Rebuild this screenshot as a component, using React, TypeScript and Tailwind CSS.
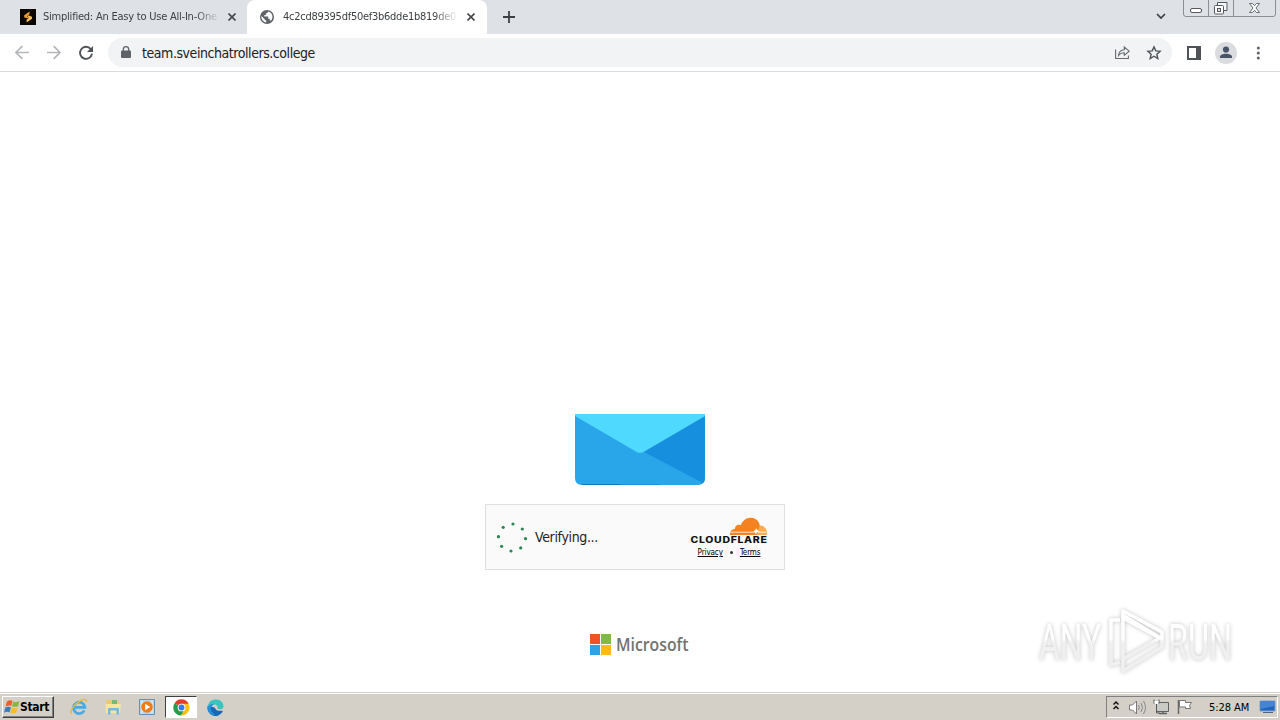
import type { ReactNode } from 'react'
import { clsx } from 'clsx'

function CloseIcon() {
  return (
    <svg width="8" height="8" viewBox="0 0 8 8" className="shrink-0">
      <path d="M0.5 0.5 L7.5 7.5 M7.5 0.5 L0.5 7.5" stroke="#45484c" strokeWidth="1.6" />
    </svg>
  )
}

function SimplifiedIcon() {
  return (
    <svg width="16" height="16" viewBox="0 0 16 16" className="shrink-0">
      <path d="M0 0h16v16H0z" fill="#090604" />
      <path d="M4.200 8.500V6.300l5.300-3.800v2.700L7 7.200l1.500.8v1.500z" fill="#e99a35" />
      <path d="m8 6.300 4 1.400v2l-5.400 3.800v-2.700l2.600-2-1.200-.6z" fill="#f9c05c" />
    </svg>
  )
}

function GlobeIcon() {
  return (
    <svg width="14" height="14" viewBox="0 0 14 14" className="shrink-0">
      <circle cx="7" cy="7" r="7" fill="#5f6368" />
      <path d="M8 1.5c-.3 1.4-.8 1.9-2.1 1.9v1.5H4.4v1.6h3.8v2.3h1.6v1.6h1.3a5.7 5.7 0 0 0 1.4-3.7A5.7 5.7 0 0 0 8 1.5z" fill="#fff" />
      <path d="M1.4 6 4.8 9.3v1h1.4v2.3A5.7 5.7 0 0 1 1.4 6z" fill="#fff" />
    </svg>
  )
}

function TabStrip() {
  return (
    <div className="flex h-[34px] bg-[#dee1e6] text-[11px] text-[#3c4043]">
      <div className="flex h-[34px] w-[247px] items-center pl-5 pr-[11px]">
        <SimplifiedIcon />
        <div className="ml-[7px] w-[177px] overflow-hidden whitespace-nowrap tracking-[-0.22px] mask-r-from-86% mask-r-to-100%">
          Simplified: An Easy to Use All-In-One
        </div>
        <span className="ml-auto flex"><CloseIcon /></span>
      </div>
      <div className="flex h-[34px] w-[240px] items-center rounded-t-lg bg-white pl-[13px] pr-3">
        <GlobeIcon />
        <div className="ml-[9px] w-[175px] overflow-hidden whitespace-nowrap tracking-[-0.26px] mask-r-from-86% mask-r-to-100%">
          4c2cd89395df50ef3b6dde1b819de0
        </div>
        <span className="ml-auto flex"><CloseIcon /></span>
      </div>
      <svg width="12" height="12" viewBox="0 0 12 12" className="ml-4 mt-[11px]">
        <path d="M6 0v12M0 6h12" stroke="#3c4043" strokeWidth="1.8" />
      </svg>
      <div className="ml-auto flex">
        <svg width="10" height="7" viewBox="0 0 10 7" className="mr-[17px] mt-[13px]">
          <path d="m1 1 4 4 4-4" fill="none" stroke="#3c4043" strokeWidth="1.7" />
        </svg>
        <svg width="97" height="18" viewBox="0 0 97 18">
          <path d="M.5 0v14q0 2.500 2.500 2.500h87q2.500 0 2.500-2.500V0M25.500 0v16.500M50.500 0v16.500" fill="none" stroke="#8b8e93" />
          <rect x="7.5" y="8.5" width="11" height="4" rx="1.5" fill="#fff" stroke="#55585d" />
          <path d="M34.500 5V2.500h9.500v8h-3" fill="#f5f6f7" stroke="#55585d" />
          <rect x="31.5" y="5.5" width="9" height="8.5" rx="1" fill="#fff" stroke="#55585d" />
          <rect x="34.5" y="8.5" width="3" height="3" fill="#dee1e6" stroke="#55585d" />
          <path d="M66.500 3.500h3l2 2.200 2-2.200h3l-3.500 4.500 3.500 4.500h-3l-2-2.200-2 2.200h-3L70 8z" fill="#fff" stroke="#676a6f" />
        </svg>
      </div>
    </div>
  )
}

function Toolbar() {
  return (
    <div className="flex h-[38px] items-center border-b border-[#d9dbdd] bg-white pl-[15px]">
      <svg width="80" height="16" viewBox="0 0 80 16" fill="none">
        <path d="M14 7.500H1M7.300 1.200 1 7.500l6.300 6.300" stroke="#b4b6b9" strokeWidth="1.7" />
        <path d="M32 7.500h13M38.700 1.200 45 7.500l-6.300 6.300" stroke="#b4b6b9" strokeWidth="1.7" />
        <path d="M75.700 4A6 6 0 1 0 77 8.700" stroke="#4f5358" strokeWidth="1.9" />
        <path d="M78 1v6h-6z" fill="#4f5358" />
      </svg>
      <div className="ml-[13px] flex h-[29px] w-[1064px] items-center rounded-full bg-[#f1f3f4] pl-[13px] pr-[10px]">
        <svg width="10" height="13" viewBox="0 0 10 13">
          <rect y="4.5" width="10" height="7.5" rx="1" fill="#5f6368" />
          <path d="M2.300 5V3.400a2.700 2.700 0 0 1 5.400 0V5" fill="none" stroke="#5f6368" strokeWidth="1.3" />
        </svg>
        <span className="ml-[11px] text-[14px] leading-none tracking-[-0.44px] text-[#202124]">
          team.sveinchatrollers.college
        </span>
        <svg width="15" height="15" viewBox="0 0 15 15" className="ml-auto" fill="none" stroke="#66696e" strokeWidth="1.1">
          <path d="M.6 4.500v9h12.800v-3" />
          <path d="M3.500 10.500c.3-3.800 2.400-5.600 5.800-5.800V2l4.900 4.200-4.900 4.200V7.800c-2.600 0-4.400.8-5.800 2.700z" />
        </svg>
        <svg width="16" height="16" viewBox="0 0 24 24" className="ml-[16px]">
          <path d="m12 2.800 2.700 6 6.500.6-4.900 4.400 1.400 6.500-5.700-3.400-5.700 3.400 1.400-6.500-4.900-4.400 6.500-.6z" fill="none" stroke="#505459" strokeWidth="2.1" />
        </svg>
      </div>
      <svg width="14" height="14" viewBox="0 0 14 14" className="ml-[15px]">
        <path d="M1 1h12v12H1z" fill="none" stroke="#4f5358" strokeWidth="2" />
        <path d="M9 0h5v14H9z" fill="#4f5358" />
      </svg>
      <svg width="22" height="22" viewBox="0 0 22 22" className="ml-[14px]">
        <circle cx="11" cy="11" r="11" fill="#dadce0" />
        <circle cx="11" cy="7.5" r="3.1" fill="#495468" />
        <path d="M5 16v-1.200c0-4 12-4 12 0V16z" fill="#495468" />
      </svg>
      <svg width="4" height="14" viewBox="0 0 4 14" className="ml-[19px]" fill="#5f6368">
        <circle cx="2.3" cy="2" r="1.5" />
        <circle cx="2.3" cy="7" r="1.5" />
        <circle cx="2.3" cy="12" r="1.5" />
      </svg>
    </div>
  )
}

function Envelope() {
  return (
    <svg width="130" height="71" viewBox="0 0 130 71">
      <path d="M0 0h130v64q0 7-7 7H7q-7 0-7-7z" fill="#29a5ea" />
      <path d="M130 2v62q0 3-2 5L69 38z" fill="#168fdf" />
      <path d="M0 0h130v2L70 37q-5 4-10 0L0 2z" fill="#50d9ff" />
      <path d="M7 70.500h38" stroke="#1276b8" />
      <path d="M45 70.500h40" stroke="#168fdf" />
    </svg>
  )
}

const spinnerDots = [
  [16, 2], [25.3, 7], [28.5, 16.7], [23.7, 25.9], [14, 29], [4.6, 24.3], [1.5, 14.7], [6.2, 5.3],
]

function CloudflareLogo() {
  return (
    <svg width="78" height="28" viewBox="0 0 78 28" overflow="visible">
      <path d="M40 19c-.3-4 2-6 5-6-.2-3.500 3-5.200 5.800-3.800C53 4 57 1.200 61.500 1.700c5 .5 8 3.800 8.500 9L67.500 19z" fill="#f58220" />
      <path d="M66.500 19 70 9.500c4.500-.2 7.300 4 7 9.500z" fill="#faad4d" />
      <path d="M40 16.200h24.500c1.700 0 2.500-1 3.400-2.500M68 16.200h8" fill="none" stroke="#fff" strokeWidth=".8" />
      <path d="m66 12 1.300 2.200L70 15.500l-3 .8-1.300 2.200-.8-2.500-2.200-.7 2.500-1z" fill="#fff" />
      <g transform="translate(0.5 27.4) scale(1.22 1)">
        <text fontFamily="Inter, Liberation Sans, sans-serif" fontSize="8.6" fontWeight="800" textLength="62.6" lengthAdjust="spacing" fill="#111">
          CLOUDFLARE
        </text>
      </g>
    </svg>
  )
}

function Challenge() {
  return (
    <div className="mr-[10px] mt-[19px] flex h-[66px] w-[300px] items-center border border-[#e0e0e0] bg-[#fafafa] pl-[11px] pr-4">
      <svg width="31" height="31" viewBox="0 0 31 31">
        {spinnerDots.map(([cx, cy]) => (
          <circle key={cx} cx={cx} cy={cy} r="1.6" fill="#2c8752" />
        ))}
      </svg>
      <span className="ml-[7px] text-[14px] tracking-[-0.35px] text-[#232323]">Verifying...</span>
      <div className="ml-auto flex flex-col items-center">
        <CloudflareLogo />
        <div className="mt-[3px] flex items-center text-[8px] leading-[11px] tracking-[-0.1px] text-black">
          <span className="underline">Privacy</span>
          <span className="mx-[7px] size-[3px] rounded-full bg-[#333]" />
          <span className="underline">Terms</span>
        </div>
      </div>
    </div>
  )
}

function MicrosoftLogo() {
  return (
    <svg width="100" height="22" viewBox="0 0 100 22" className="mt-[64px]" overflow="visible">
      <path d="M0 0h10v10H0z" fill="#ef5429" />
      <path d="M11 0h10v10H11z" fill="#80bb45" />
      <path d="M0 11h10v10H0z" fill="#2ba3e8" />
      <path d="M11 11h10v10H11z" fill="#ffb91b" />
      <text x="26" y="17" fontFamily="Open Sans, sans-serif" fontSize="17.5" fontWeight="600" textLength="72.5" lengthAdjust="spacingAndGlyphs" fill="#737373">
        Microsoft
      </text>
    </svg>
  )
}

function Watermark() {
  return (
    <svg width="204" height="72" viewBox="0 0 204 72" overflow="visible" className="absolute right-[42px] bottom-[16px] drop-shadow-[0_0_2px_rgba(0,0,0,0.24)]">
      <defs>
        <linearGradient id="fade" x1="0" y1="0" x2="0" y2="72" gradientUnits="userSpaceOnUse">
          <stop offset=".48" stopColor="#fff" />
          <stop offset=".54" stopColor="#f0f0f0" />
        </linearGradient>
      </defs>
      <g fontFamily="Roboto, Liberation Sans, sans-serif" fontSize="50" fill="url(#fade)">
        <text x="5" y="56" textLength="62" lengthAdjust="spacingAndGlyphs">ANY</text>
        <text x="134" y="56" textLength="64" lengthAdjust="spacingAndGlyphs">RUN</text>
      </g>
      <g fill="none" stroke="url(#fade)" strokeWidth="3.5" strokeLinejoin="round">
        <path d="M89 11v44l37-21z" />
        <path d="M86 16h-9v45l9-3M128 34v-6L89 7v7l37 20M89 55v12l39-24v-9" />
      </g>
    </svg>
  )
}

function StartFlag() {
  return (
    <svg width="16" height="16" viewBox="0 0 16 16">
      <path d="M3 2.500q3-2 5.500-.5L7.200 7Q5 6 1.500 7.500z" fill="#e8612c" />
      <path d="M9.300 2.500q3 1.500 6-.5L14 7.200q-3 1.300-6 0z" fill="#83b83b" />
      <path d="M1.300 8.500q3-1.500 5.600-.3L5.600 13.400Q3 12 0 13.700z" fill="#367fc8" />
      <path d="M7.700 8.500q3 1.300 6 0l-1.400 5.200q-3 1.600-6 .1z" fill="#f7bd31" />
    </svg>
  )
}

function IeIcon() {
  return (
    <svg width="18" height="18" viewBox="0 0 18 18" fill="none">
      <path d="M14.300 12.500a5.700 5.700 0 1 1 .6-3.200H5" stroke="#4aa9df" strokeWidth="2.7" />
      <path d="M2 16c-3-3 2-9 7-12.300C13 1 17 .5 16.500 4" stroke="#e8b83d" strokeWidth="1.4" />
    </svg>
  )
}

function FolderIcon() {
  return (
    <svg width="18" height="18" viewBox="0 0 18 18">
      <path d="M2 3q0-1 1-1h4l1 1h6l1 3v9H2z" fill="#e9cb6c" />
      <path d="M8 2h5v4H8z" fill="#79b978" />
      <path d="M1.500 6H17l-1 9H2z" fill="#f7e5a0" />
      <path d="M4 16.500V11q0-1 1-1h9q1 0 1 1v5.500h-2.500v-4h-6v4z" fill="#74b7df" />
    </svg>
  )
}

function MediaIcon() {
  return (
    <svg width="18" height="18" viewBox="0 0 18 18">
      <path d="M1.500 1.500h15v15h-15z" fill="#b6d8ee" stroke="#5d93bd" />
      <path d="M4 2.500v13M14 2.500v13" stroke="#e7f4fc" />
      <circle cx="9" cy="9" r="5.8" fill="#ef7d17" />
      <path d="m7.200 5.800 5 3.200-5 3.200z" fill="#fff" />
    </svg>
  )
}

function ChromeIcon() {
  return (
    <svg width="17" height="17" viewBox="0 0 18 18">
      <path d="M9 9 1.600 4.500A8.500 8.500 0 0 1 16.500 5z" fill="#e33b2e" />
      <path d="M9 9V5h7.500A8.500 8.500 0 0 1 8.500 17.500z" fill="#fbc116" />
      <path d="m9 9 3 2-3.700 6.500A8.500 8.500 0 0 1 1.600 4.500z" fill="#279b4b" />
      <circle cx="9" cy="9" r="4.1" fill="#fff" />
      <circle cx="9" cy="9" r="3.1" fill="#3978e7" />
    </svg>
  )
}

function EdgeIcon() {
  return (
    <svg width="17" height="17" viewBox="0 0 18 18">
      <path d="M17 12.500A8.500 8.500 0 1 1 1 6.500z" fill="#1569b8" />
      <path d="M.8 9C1 3 5 .6 9.500.6c5 0 8.300 3.800 7.900 7.700-.3 2.500-3.400 3.200-6.400 2.400C12 7.500 9.500 5 6.500 5.200 3.500 5.400 1.500 6.800.8 9z" fill="#3bc4bd" />
      <path d="M.8 9C2 5.500 5.500 4 8.500 5.500 5 6 3.500 9 4.500 12.500l4 5C3.500 17.500.5 13.500.8 9z" fill="#258fd7" />
      <path d="M9 7.500c-1.500 3 1 6 7.800 4.800l.7-2.600c-2 1.500-5.500 1.500-6.500.7.500-1.500-.5-2.700-2-2.900z" fill="#d4d0c8" />
    </svg>
  )
}

function TaskButton({ active, children }: { active?: boolean; children: ReactNode }) {
  return (
    <div className={clsx(
      'flex h-[22px] w-[32px] items-center justify-center border',
      active ? 'border-t-[#404040] border-l-[#404040] border-r-white border-b-white bg-white' : 'border-transparent'
    )}>
      {children}
    </div>
  )
}

function Taskbar() {
  return (
    <div className="flex h-[28px] border-t border-[#d4d0c8] bg-[#d4d0c8]">
      <div className="flex w-full items-start border-t border-white pl-[2px] pr-[2px] pt-[2px]">
        <div className="flex h-[22px] w-[52px] items-center border border-t-white border-l-white border-r-[#404040] border-b-[#404040] pl-px text-black shadow-[inset_-1px_-1px_0_#808080]">
          <StartFlag />
          <span className="text-[12px] font-bold leading-none tracking-[-0.3px]">Start</span>
        </div>
        <div className="ml-[9px] flex gap-[2px]">
          <TaskButton><IeIcon /></TaskButton>
          <TaskButton><FolderIcon /></TaskButton>
          <TaskButton><MediaIcon /></TaskButton>
          <TaskButton active><ChromeIcon /></TaskButton>
          <TaskButton><EdgeIcon /></TaskButton>
        </div>
        <div className="ml-auto flex h-[22px] w-[172px] items-center border border-t-[#808080] border-l-[#808080] border-r-white border-b-white pl-[6px] pr-px">
          <svg width="80" height="18" viewBox="0 0 80 18" fill="none">
            <path d="m.5 6.500 2.500-2.500 2.500 2.500M.5 11 3 8.500 5.500 11" stroke="#111" strokeWidth="1.5" />
            <path d="M16.500 7h3l4-4v13l-4-4h-3z" fill="#fff" stroke="#77777a" />
            <path d="M25.500 7q1.500 2.500 0 5M28 5q3 4.500 0 9M30.500 3q4 6.500 0 13" stroke="#85878a" />
            <path d="M43.500 4.500h12v9h-12z" fill="#c9c9c6" stroke="#5e6265" />
            <path d="M46 15.500h8M50 14v2" stroke="#5e6265" strokeWidth="1.5" />
            <path d="M41 1.500v4h5v-4M43.500 5.500V15h3" stroke="#55585b" />
            <path d="M41.500 3h4v3h-4z" fill="#fff" />
            <path d="M65.500 2v14" stroke="#666" strokeWidth="1.5" />
            <path d="M66.500 2.500h6v2h6l-2 3 1 3h-5V9h-6z" fill="#fff" stroke="#777" />
          </svg>
          <span className="ml-[16px] text-[11px] leading-none tracking-[-0.05px] whitespace-nowrap text-black">5:28 AM</span>
          <svg width="17" height="16" viewBox="0 0 17 16" className="ml-auto">
            <path d="M1 2h15v10H1z" fill="#2263bd" stroke="#7ca2ce" />
            <path d="m2 3 13-.5V7L2 10z" fill="#4385d4" />
            <path d="M4 13.500h10" stroke="#4b6586" />
          </svg>
        </div>
      </div>
    </div>
  )
}

export default function App() {
  return (
    <div className="flex h-screen w-screen flex-col overflow-hidden bg-white font-['DejaVu_Sans_Condensed','DejaVu_Sans',sans-serif]">
      <TabStrip />
      <Toolbar />
      <main className="relative flex flex-1 flex-col items-center bg-white pt-[342px]">
        <Envelope />
        <Challenge />
        <MicrosoftLogo />
        <Watermark />
      </main>
      <Taskbar />
    </div>
  )
}
